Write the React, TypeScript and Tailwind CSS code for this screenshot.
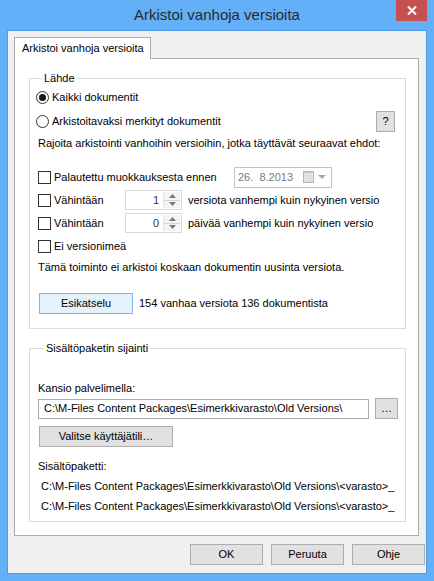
import React from 'react';

const font = { fontFamily: '"Liberation Sans", Arial, sans-serif' };

const Checkbox = () => (
  <span className="w-[13px] h-[13px] shrink-0 border border-[#333333] bg-white" />
);

const Radio = ({ checked }: { checked?: boolean }) => (
  <span className="w-[13px] h-[13px] shrink-0 rounded-full border border-[#333333] bg-white flex items-center justify-center">
    {checked && <span className="w-[7px] h-[7px] rounded-full bg-[#1a1a1a]" />}
  </span>
);

const Spinner = ({ value }: { value: string }) => (
  <div className="w-[57px] h-[20px] shrink-0 border border-[#d9d9d9] bg-white flex">
    <span className="flex-1 text-right pr-[4px] leading-[18px] text-[#333333]">{value}</span>
    <div className="w-[17px] flex flex-col border-l border-[#e3e3e3] my-[1px] mr-[1px]">
      <div className="flex-1 flex items-center justify-center bg-[#f4f4f4] border-b border-[#d4d4d4]">
        <svg width="7" height="4" viewBox="0 0 7 4">
          <path d="M0 4 L3.5 0 L7 4 Z" fill="#7a7a7a" />
        </svg>
      </div>
      <div className="flex-1 flex items-center justify-center bg-[#f4f4f4]">
        <svg width="7" height="4" viewBox="0 0 7 4">
          <path d="M0 0 L3.5 4 L7 0 Z" fill="#7a7a7a" />
        </svg>
      </div>
    </div>
  </div>
);

const WinButton = ({
  children,
  className = '',
}: {
  children: React.ReactNode;
  className?: string;
}) => (
  <button
    className={`h-[21px] border border-[#adadad] bg-[#e1e1e1] text-black flex items-center justify-center whitespace-nowrap ${className}`}
  >
    {children}
  </button>
);

export default function App() {
  return (
    <div className="w-[434px] h-[581px] bg-[#63b0f8] flex flex-col text-[11px] text-black whitespace-nowrap" style={font}>
      {/* Title bar */}
      <div className="h-[30px] relative flex items-center justify-center shrink-0">
        <span className="text-[15px] text-[#2a2a2a] mt-[1px]">Arkistoi vanhoja versioita</span>
        <div className="absolute top-0 right-[7px] w-[31px] h-[21px] bg-[#c75050] flex items-center justify-center">
          <svg width="10" height="9" viewBox="0 0 10 9">
            <path d="M1 0.5 L9 8.5 M9 0.5 L1 8.5" stroke="#ffffff" strokeWidth="2" />
          </svg>
        </div>
      </div>

      {/* Client */}
      <div className="ml-[7px] w-[420px] h-[544px] border border-[#4f9ae6] bg-[#f0f0f0] flex flex-col pt-[6px] pl-[6px]">
        <div className="w-[137px] h-[22px] -mb-px relative z-10 bg-white border border-b-0 border-[#acacac] flex items-center pl-[7px]">
          Arkistoi vanhoja versioita
        </div>
        <div className="w-[405px] h-[478px] border border-[#acacac] bg-white pl-[14px] pt-[11px]">
          {/* Lähde */}
          <fieldset className="w-[377px] h-[259px] border border-[#dcdcdc] pl-[6px] pt-0">
            <legend className="ml-[6px] px-[2px] leading-[16px]">Lähde</legend>
            <div className="h-[20px] mt-[1px] flex items-center gap-[3px]">
              <Radio checked />
              <span>Kaikki dokumentit</span>
            </div>
            <div className="h-[20px] mt-[4px] flex items-center gap-[3px]">
              <Radio />
              <span>Arkistoitavaksi merkityt dokumentit</span>
              <WinButton className="ml-auto mr-[10px] w-[19px] h-[21px]">?</WinButton>
            </div>
            <div className="h-[20px] mt-[2px] ml-[2px] flex items-center">
              Rajoita arkistointi vanhoihin versioihin, jotka täyttävät seuraavat ehdot:
            </div>
            <div className="h-[20px] mt-[14px] ml-[2px] flex items-center">
              <div className="w-[196px] flex items-center gap-[3px]">
                <Checkbox />
                <span>Palautettu muokkauksesta ennen</span>
              </div>
              <div className="w-[98px] h-[21px] border border-[#c3c3c3] bg-white flex items-center pl-[3px] text-[#7a7a7a]">
                <span className="flex-1">26.&nbsp;&nbsp;8.2013</span>
                <svg width="12" height="12" viewBox="0 0 12 12" className="mr-[3px]">
                  <rect x="0.5" y="0.5" width="10" height="11" fill="#f4f4f4" stroke="#b5b5b5" />
                  <rect x="0.5" y="0.5" width="10" height="2" fill="#c8c8c8" />
                  <path d="M3 3 V11 M5.5 3 V11 M8 3 V11 M1 5 H10 M1 7.5 H10 M1 10 H10" stroke="#d3d3d3" strokeWidth="1" />
                </svg>
                <svg width="8" height="4" viewBox="0 0 8 4" className="mr-[5px]">
                  <path d="M0 0 L4 4 L8 0 Z" fill="#a9a9a9" />
                </svg>
              </div>
            </div>
            <div className="h-[20px] mt-[3px] ml-[2px] flex items-center">
              <div className="w-[87px] flex items-center gap-[3px]">
                <Checkbox />
                <span>Vähintään</span>
              </div>
              <Spinner value="1" />
              <span className="ml-[6px]">versiota vanhempi kuin nykyinen versio</span>
            </div>
            <div className="h-[20px] mt-[3px] ml-[2px] flex items-center">
              <div className="w-[87px] flex items-center gap-[3px]">
                <Checkbox />
                <span>Vähintään</span>
              </div>
              <Spinner value="0" />
              <span className="ml-[6px]">päivää vanhempi kuin nykyinen versio</span>
            </div>
            <div className="h-[20px] mt-[3px] ml-[2px] flex items-center gap-[3px]">
              <Checkbox />
              <span>Ei versionimeä</span>
            </div>
            <div className="h-[20px] mt-[1px] ml-[2px] flex items-center">
              Tämä toiminto ei arkistoi koskaan dokumentin uusinta versiota.
            </div>
            <div className="mt-[16px] ml-[3px] flex items-center">
              <button className="w-[94px] h-[21px] border border-[#7eb4ea] bg-[#e5f1fb] flex items-center justify-center">
                Esikatselu
              </button>
              <span className="ml-[6px]">154 vanhaa versiota 136 dokumentista</span>
            </div>
          </fieldset>

          {/* Sisältöpaketin sijainti */}
          <fieldset className="w-[377px] h-[182px] mt-[11px] border border-[#dcdcdc] pl-[8px] pt-0">
            <legend className="ml-[6px] px-[2px] leading-[16px]">Sisältöpaketin sijainti</legend>
            <div className="h-[20px] mt-[22px] flex items-center">Kansio palvelimella:</div>
            <div className="h-[21px] flex items-center">
              <div className="w-[331px] h-[20px] border border-[#acacac] bg-white flex items-center pl-[5px]">
                C:\M-Files Content Packages\Esimerkkivarasto\Old Versions\
              </div>
              <WinButton className="ml-[6px] w-[23px]">…</WinButton>
            </div>
            <WinButton className="mt-[7px] ml-[1px] w-[134px]">Valitse käyttäjätili…</WinButton>
            <div className="h-[19px] mt-[10px] flex items-center">Sisältöpaketti:</div>
            <div className="h-[20px] pl-[3px] flex items-center">
              C:\M-Files Content Packages\Esimerkkivarasto\Old Versions\&lt;varasto&gt;_
            </div>
            <div className="h-[20px] pl-[3px] flex items-center">
              C:\M-Files Content Packages\Esimerkkivarasto\Old Versions\&lt;varasto&gt;_
            </div>
          </fieldset>
        </div>

        {/* Dialog buttons */}
        <div className="w-[411px] mt-[8px] flex justify-end gap-[8px]">
          <WinButton className="w-[73px]">OK</WinButton>
          <WinButton className="w-[73px]">Peruuta</WinButton>
          <WinButton className="w-[73px]">Ohje</WinButton>
        </div>
      </div>
    </div>
  );
}
